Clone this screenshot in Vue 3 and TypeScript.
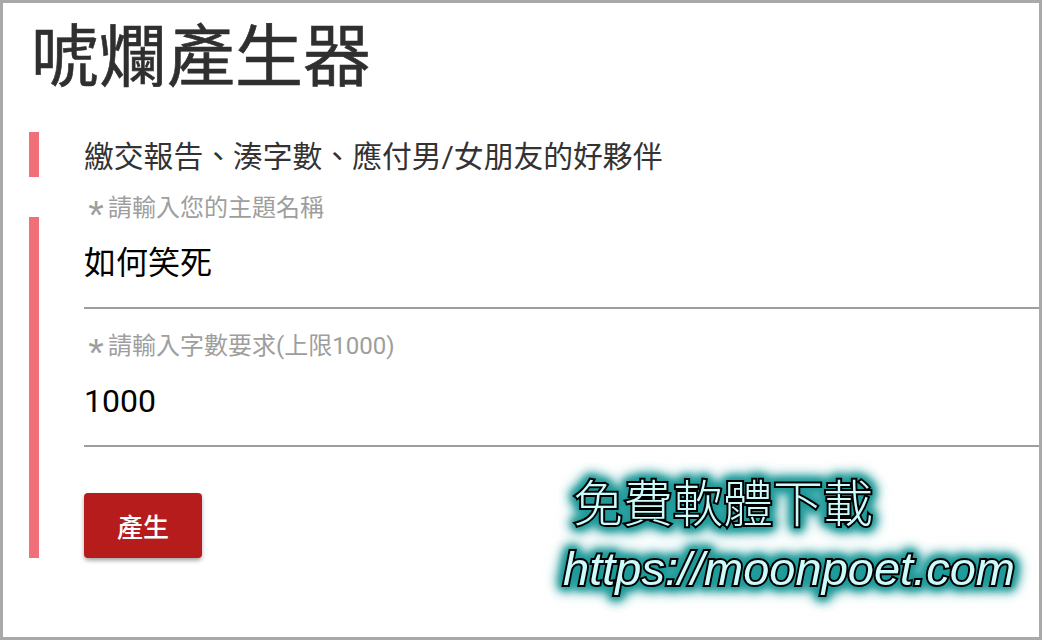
<script setup lang="ts">
interface Field {
  label: string
  value: string
}

const fields: Field[] = [
  { label: '請輸入您的主題名稱', value: '如何笑死' },
  { label: '請輸入字數要求(上限1000)', value: '1000' },
]
</script>

<template>
  <main class="page">
    <h1 class="title">唬爛產生器</h1>
    <p class="intro">繳交報告、湊字數、應付男/女朋友的好夥伴</p>
    <form class="form" @submit.prevent>
      <div v-for="field in fields" :key="field.label" class="field">
        <div class="label"><span class="star">*</span>{{ field.label }}</div>
        <div class="value">{{ field.value }}</div>
      </div>
      <button class="submit" type="button">產生</button>
    </form>
    <div class="mark">
      <div class="mark-zh">免費軟體下載</div>
      <div class="mark-url">https://moonpoet.com</div>
    </div>
  </main>
</template>

<style>
html,
body {
  margin: 0;
  background: #fff;
}
</style>

<style scoped>
.page {
  position: relative;
  box-sizing: border-box;
  width: 1042px;
  height: 640px;
  overflow: hidden;
  border: 3px solid #a9a9a9;
  padding: 0 0 0 26px;
  background: #fff;
  color: #333;
  font-family: Roboto, "Noto Sans CJK TC", sans-serif;
}
.title {
  margin: 0;
  height: 129px;
  padding: 15px 0 0 2px;
  box-sizing: border-box;
  font-size: 68px;
  line-height: 80px;
  font-weight: 400;
  color: #2f2f2f;
  -webkit-text-stroke: 0.6px #2f2f2f;
}
.intro {
  box-sizing: border-box;
  height: 45px;
  margin: 0 0 40px;
  border-left: 10px solid #f06f78;
  padding-left: 45px;
  font-size: 29.8px;
  line-height: 49px;
  color: #333;
  white-space: nowrap;
}
.form {
  box-sizing: border-box;
  height: 341px;
  border-left: 10px solid #f06f78;
  padding-left: 45px;
  display: flex;
  flex-direction: column;
  position: relative;
}
.field {
  box-sizing: border-box;
  flex: none;
  height: 138px;
  padding-top: 20px;
  border-bottom: 2px solid #9e9e9e;
}
.field:first-child {
  margin-top: -46px;
}
.label {
  height: 34px;
  font-size: 24px;
  line-height: 34px;
  color: #9e9e9e;
  white-space: nowrap;
  display: flex;
}
.star {
  width: 24px;
  font-size: 40px;
  line-height: 48px;
  text-align: center;
  font-family: "Liberation Sans", sans-serif;
}
.value {
  padding-top: 16px;
  font-size: 32px;
  line-height: 44px;
  color: #000;
}
.submit {
  flex: none;
  width: 118px;
  height: 65px;
  margin-top: 46px;
  border: 0;
  border-radius: 4px;
  padding: 0;
  background: #b71c1c;
  color: #fff;
  font-family: inherit;
  font-size: 26px;
  font-weight: 500;
  box-shadow: 0 3px 5px -1px rgba(0, 0, 0, 0.3), 0 2px 4px rgba(0, 0, 0, 0.14);
}
.mark {
  position: absolute;
  left: 560px;
  top: 465px;
  color: #cdfbfb;
  font-family: "Noto Sans CJK TC", sans-serif;
  font-weight: 300;
  white-space: nowrap;
  -webkit-text-stroke: 4px #000;
  paint-order: stroke fill;
  filter: drop-shadow(0 0 3px #1f9a9a) drop-shadow(0 0 4px #1f9a9a) drop-shadow(0 0 5px #1f9a9a) drop-shadow(0 0 4px rgba(31, 154, 154, 0.6));
}
.mark-zh {
  margin-left: 10px;
  font-size: 50px;
  line-height: 64px;
}
.mark-url {
  margin-top: 4px;
  font-size: 47px;
  line-height: 66px;
  font-style: italic;
  font-family: "Liberation Sans", sans-serif;
}
</style>
